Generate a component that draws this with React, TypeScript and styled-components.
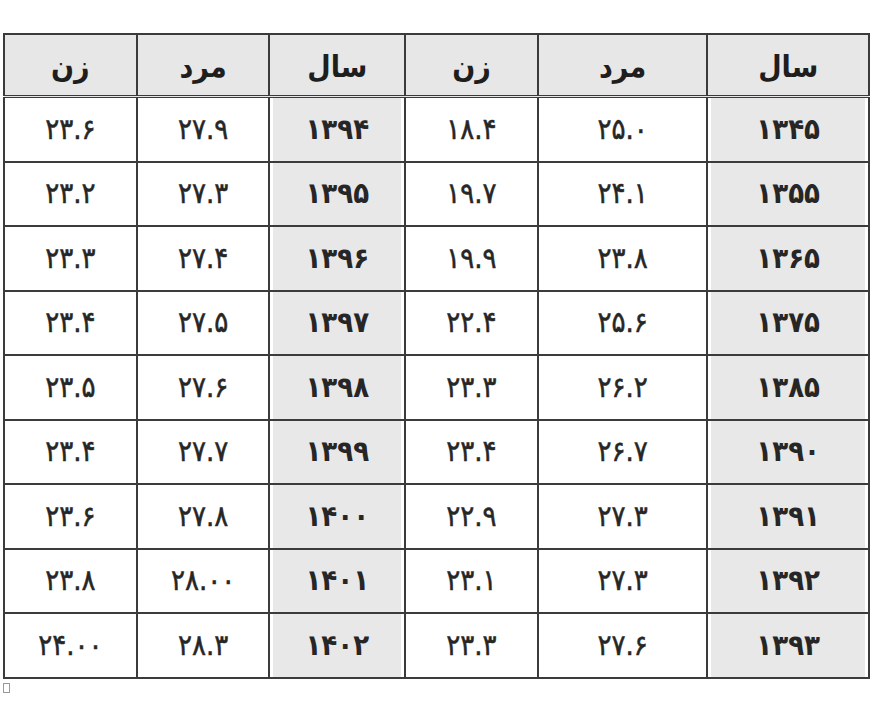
import React from "react";
import styled, { createGlobalStyle } from "styled-components";

const GlobalStyle = createGlobalStyle`
    html, body {
        margin: 0;
        padding: 0;
        background: #ffffff;
    }
    body {
        font-family: "DejaVu Sans Condensed", "DejaVu Sans", sans-serif;
        font-stretch: condensed;
        color: #222222;
    }
`;

const Page = styled.div`
    width: 872px;
    height: 708px;
    padding: 33px 2px 0 3px;
    box-sizing: border-box;
    display: flex;
    flex-direction: column;
    gap: 4px;
`;

const Table = styled.table`
    direction: rtl;
    width: 867px;
    border-collapse: collapse;
    table-layout: fixed;
    border: 2px solid #3b3b3b;
`;

const Col = styled.col<{ w: number }>`
    width: ${({ w }) => (w / 867) * 100}%;
`;

const HeadCell = styled.th`
    height: 57px;
    padding: 3px 0 0;
    background: #e7e7e7;
    border: 2px solid #3b3b3b;
    border-bottom: 3px double #3b3b3b;
    font-size: 30px;
    font-weight: 700;
    text-align: center;
    vertical-align: middle;
    color: #1e1e1e;
    line-height: 1;
`;

const Cell = styled.td<{ shaded?: boolean }>`
    height: 62.5px;
    padding: 0;
    border: 2px solid #3b3b3b;
    background: ${({ shaded }) => (shaded ? "#e8e8e8" : "#ffffff")};
    box-shadow: ${({ shaded }) =>
        shaded ? "inset 3px 0 0 #ffffff, inset -3px 0 0 #ffffff" : "none"};
    font-size: 29px;
    font-weight: ${({ shaded }) => (shaded ? 700 : 400)};
    -webkit-text-stroke: ${({ shaded }) => (shaded ? "0" : "0.5px #262626")};
    letter-spacing: -1px;
    text-align: center;
    vertical-align: middle;
    color: #262626;
    line-height: 1;
`;

const Handle = styled.span`
    display: block;
    width: 5px;
    height: 8px;
    border: 1px solid #9a9a9a;
    background: #ffffff;
`;

const toFa = (s: string) =>
    s.replace(/[0-9]/g, (d) => "۰۱۲۳۴۵۶۷۸۹"[Number(d)]);

const widths = [162, 170, 133, 136, 133, 133];
const heads = ["سال", "مرد", "زن", "سال", "مرد", "زن"];

const rows: string[][] = [
    ["1345", "25.0", "18.4", "1394", "27.9", "23.6"],
    ["1355", "24.1", "19.7", "1395", "27.3", "23.2"],
    ["1365", "23.8", "19.9", "1396", "27.4", "23.3"],
    ["1375", "25.6", "22.4", "1397", "27.5", "23.4"],
    ["1385", "26.2", "23.3", "1398", "27.6", "23.5"],
    ["1390", "26.7", "23.4", "1399", "27.7", "23.4"],
    ["1391", "27.3", "22.9", "1400", "27.8", "23.6"],
    ["1392", "27.3", "23.1", "1401", "28.00", "23.8"],
    ["1393", "27.6", "23.3", "1402", "28.3", "24.00"]
];

export default function App() {
    return (
        <>
            <GlobalStyle />
            <Page>
                <Table>
                    <colgroup>
                        {widths.map((w, i) => (
                            <Col key={i} w={w} />
                        ))}
                    </colgroup>
                    <thead>
                        <tr>
                            {heads.map((h, i) => (
                                <HeadCell key={i}>{h}</HeadCell>
                            ))}
                        </tr>
                    </thead>
                    <tbody>
                        {rows.map((r, i) => (
                            <tr key={i}>
                                {r.map((v, j) => (
                                    <Cell key={j} shaded={j % 3 === 0}>
                                        {toFa(v)}
                                    </Cell>
                                ))}
                            </tr>
                        ))}
                    </tbody>
                </Table>
                <Handle />
            </Page>
        </>
    );
}
